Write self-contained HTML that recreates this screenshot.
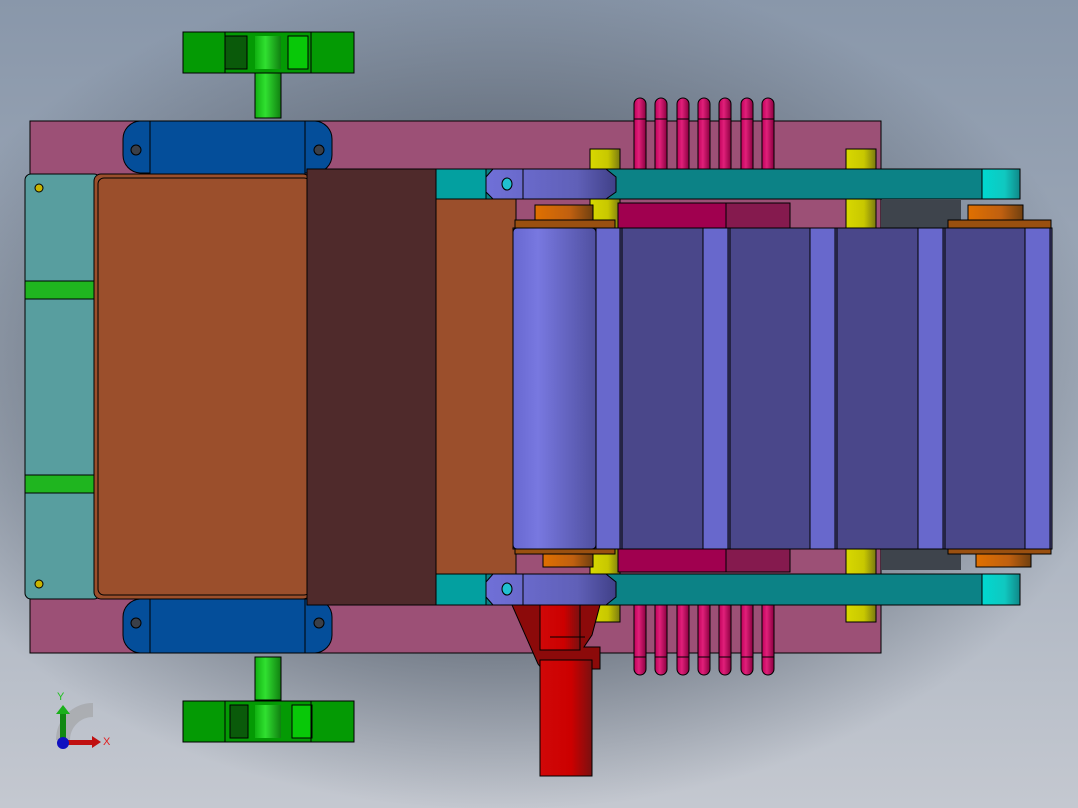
<!DOCTYPE html>
<html><head><meta charset="utf-8"><style>
html,body{margin:0;padding:0;width:1078px;height:808px;overflow:hidden}
body{background:radial-gradient(ellipse 620px 420px at 500px 390px,#3c4550 0%,#5a6370 45%,rgba(0,0,0,0) 100%),linear-gradient(#8997aa,#a9b2bf 60%,#c4c8d0);}
svg{position:absolute;left:0;top:0}
text{font-family:"Liberation Sans",sans-serif}
</style></head><body>
<svg width="1078" height="808" viewBox="0 0 1078 808" stroke="#000" stroke-width="1">
<defs>
<linearGradient id="rod" x1="0" x2="1"><stop offset="0" stop-color="#c0005a"/><stop offset=".4" stop-color="#e0207a"/><stop offset="1" stop-color="#8a0040"/></linearGradient>
<linearGradient id="yel" x1="0" x2="1"><stop offset="0" stop-color="#d8d800"/><stop offset=".6" stop-color="#c8c800"/><stop offset="1" stop-color="#7a7a10"/></linearGradient>
<linearGradient id="red" x1="0" x2="1"><stop offset="0" stop-color="#d00808"/><stop offset=".6" stop-color="#c00"/><stop offset="1" stop-color="#7a1010"/></linearGradient>
<linearGradient id="axle" x1="0" x2="1"><stop offset="0" stop-color="#10b010"/><stop offset=".4" stop-color="#30e030"/><stop offset="1" stop-color="#108010"/></linearGradient>
<linearGradient id="roll1" x1="0" x2="1"><stop offset="0" stop-color="#6868d0"/><stop offset=".3" stop-color="#7878e0"/><stop offset="1" stop-color="#5050a0"/></linearGradient>
<linearGradient id="clamp" x1="0" x2="1"><stop offset="0" stop-color="#7070d8"/><stop offset=".7" stop-color="#6060b8"/><stop offset="1" stop-color="#404088"/></linearGradient>
<linearGradient id="cyan" x1="0" x2="1"><stop offset="0" stop-color="#00d8d0"/><stop offset=".6" stop-color="#10c8c0"/><stop offset="1" stop-color="#108888"/></linearGradient>
<linearGradient id="org" x1="0" x2="1"><stop offset="0" stop-color="#e07000"/><stop offset=".6" stop-color="#c06010"/><stop offset="1" stop-color="#704010"/></linearGradient>
</defs>
<!-- pink plate -->
<rect x="30" y="121" width="851" height="532" fill="#9c5076"/>
<!-- rods -->
<g fill="url(#rod)">
<path d="M634 170V104a6 6 0 0 1 12 0V170Z"/><path d="M655 170V104a6 6 0 0 1 12 0V170Z"/><path d="M677 170V104a6 6 0 0 1 12 0V170Z"/><path d="M698 170V104a6 6 0 0 1 12 0V170Z"/><path d="M719 170V104a6 6 0 0 1 12 0V170Z"/><path d="M741 170V104a6 6 0 0 1 12 0V170Z"/><path d="M762 170V104a6 6 0 0 1 12 0V170Z"/>
<path d="M634 604V669a6 6 0 0 0 12 0V604Z"/><path d="M655 604V669a6 6 0 0 0 12 0V604Z"/><path d="M677 604V669a6 6 0 0 0 12 0V604Z"/><path d="M698 604V669a6 6 0 0 0 12 0V604Z"/><path d="M719 604V669a6 6 0 0 0 12 0V604Z"/><path d="M741 604V669a6 6 0 0 0 12 0V604Z"/><path d="M762 604V669a6 6 0 0 0 12 0V604Z"/>
</g>
<g fill="none" stroke="#000"><path d="M634 119h12M655 119h12M677 119h12M698 119h12M719 119h12M741 119h12M762 119h12M634 657h12M655 657h12M677 657h12M698 657h12M719 657h12M741 657h12M762 657h12"/></g>
<!-- shadow gray area right -->
<rect x="881" y="200" width="80" height="370" fill="#3e444c" stroke="none"/>
<!-- wheels -->
<rect x="255" y="73" width="26" height="45" fill="url(#axle)"/>
<rect x="183" y="32" width="171" height="41" fill="#049a04"/>
<rect x="225" y="36" width="22" height="33" fill="#0a5a0a"/><rect x="288" y="36" width="20" height="33" fill="#08c808"/>
<rect x="255" y="36" width="26" height="33" fill="url(#axle)" stroke="none"/>
<line x1="225" y1="32" x2="225" y2="73"/><line x1="311" y1="32" x2="311" y2="73"/>
<rect x="255" y="657" width="26" height="43" fill="url(#axle)"/>
<rect x="183" y="701" width="171" height="41" fill="#049a04"/>
<rect x="230" y="705" width="18" height="33" fill="#0a5a0a"/><rect x="292" y="705" width="20" height="33" fill="#08c808"/>
<rect x="255" y="705" width="26" height="33" fill="url(#axle)" stroke="none"/>
<line x1="225" y1="701" x2="225" y2="742"/><line x1="311" y1="701" x2="311" y2="742"/>
<!-- blue blocks -->
<path d="M150 121h-10a18 18 0 0 0-17 18v16a18 18 0 0 0 17 18h10Z" fill="#044e9a"/>
<path d="M305 121h10a18 18 0 0 1 17 18v16a18 18 0 0 1-17 18h-10Z" fill="#044e9a"/>
<rect x="150" y="121" width="155" height="53" fill="#044e9a"/>
<circle cx="136" cy="150" r="5" fill="#3a3f48"/><circle cx="319" cy="150" r="5" fill="#3a3f48"/>
<path d="M150 599h-10a18 18 0 0 0-17 18v18a18 18 0 0 0 17 18h10Z" fill="#044e9a"/>
<path d="M305 599h10a18 18 0 0 1 17 18v18a18 18 0 0 1-17 18h-10Z" fill="#044e9a"/>
<rect x="150" y="599" width="155" height="54" fill="#044e9a"/>
<circle cx="136" cy="623" r="5" fill="#3a3f48"/><circle cx="319" cy="623" r="5" fill="#3a3f48"/>
<!-- teal left -->
<rect x="25" y="174" width="75" height="425" rx="6" fill="#589e9f"/>
<rect x="25" y="281" width="70" height="18" fill="#1fb51f"/><rect x="25" y="475" width="70" height="18" fill="#1fb51f"/>
<circle cx="39" cy="188" r="4" fill="#c8b400"/><circle cx="39" cy="584" r="4" fill="#c8b400"/>
<!-- brown -->
<rect x="94" y="174" width="216" height="425" rx="7" fill="#9b4f2c"/>
<rect x="98" y="178" width="212" height="417" rx="6" fill="none"/>
<rect x="436" y="199" width="80" height="376" fill="#9b4f2c"/>
<rect x="307" y="169" width="129" height="436" fill="#4f2a2b"/>
<!-- yellow posts -->
<rect x="590" y="149" width="30" height="82" fill="url(#yel)"/><rect x="846" y="149" width="30" height="82" fill="url(#yel)"/>
<rect x="590" y="545" width="30" height="77" fill="url(#yel)"/><rect x="846" y="545" width="30" height="77" fill="url(#yel)"/>
<!-- magenta -->
<rect x="618" y="203" width="108" height="26" fill="#a0004f"/><rect x="726" y="203" width="64" height="26" fill="#851a4e"/>
<rect x="618" y="548" width="108" height="24" fill="#a0004f"/><rect x="726" y="548" width="64" height="24" fill="#851a4e"/>
<!-- orange gears -->
<rect x="535" y="205" width="58" height="15" fill="url(#org)"/><rect x="968" y="205" width="55" height="15" fill="url(#org)"/>
<rect x="515" y="220" width="100" height="8" fill="#9a5010"/><rect x="948" y="220" width="103" height="8" fill="#9a5010"/>
<rect x="543" y="552" width="50" height="15" fill="url(#org)"/><rect x="976" y="552" width="55" height="15" fill="url(#org)"/>
<rect x="515" y="548" width="100" height="6" fill="#9a5010"/><rect x="948" y="548" width="103" height="6" fill="#9a5010"/>
<!-- rollers -->
<rect x="513" y="228" width="539" height="321" fill="#4a478a"/>
<rect x="513" y="228" width="83" height="321" rx="4" fill="url(#roll1)"/>
<g fill="#6868cc"><rect x="596" y="228" width="24" height="321"/><rect x="703" y="228" width="25" height="321"/><rect x="810" y="228" width="25" height="321"/><rect x="918" y="228" width="25" height="321"/><rect x="1025" y="228" width="25" height="321"/></g>
<g fill="none"><line x1="622" y1="228" x2="622" y2="549"/><line x1="730" y1="228" x2="730" y2="549"/><line x1="837" y1="228" x2="837" y2="549"/><line x1="945" y1="228" x2="945" y2="549"/></g>
<!-- teal bars -->
<rect x="436" y="169" width="584" height="30" fill="#0c8286"/>
<rect x="436" y="574" width="584" height="31" fill="#0c8286"/>
<rect x="982" y="169" width="38" height="30" fill="url(#cyan)"/><rect x="982" y="574" width="38" height="31" fill="url(#cyan)"/>
<rect x="436" y="169" width="50" height="30" fill="#03a0a0"/><rect x="436" y="574" width="50" height="31" fill="#03a0a0"/>
<path d="M493 169h113l10 8v15l-10 7h-113l-7-7v-15Z" fill="url(#clamp)"/>
<path d="M493 574h113l10 8v15l-10 8h-113l-7-8v-15Z" fill="url(#clamp)"/>
<line x1="523" y1="169" x2="523" y2="199"/><line x1="523" y1="574" x2="523" y2="605"/>
<ellipse cx="507" cy="184" rx="5" ry="6" fill="#20c0d0"/><ellipse cx="507" cy="589" rx="5" ry="6" fill="#20c0d0"/>
<!-- red motor -->
<path d="M512 605h88l-8 30-8 12h16v22l-40 0-18 0-4-5Z" fill="#8c0a0a"/>
<rect x="540" y="605" width="40" height="45" fill="url(#red)"/>
<rect x="540" y="660" width="52" height="116" fill="url(#red)"/>
<line x1="550" y1="637" x2="585" y2="637"/>
<!-- triad -->
<g stroke="none">
<path d="M63 740 A30 30 0 0 1 93 710" fill="none" stroke="#999" stroke-width="14" opacity=".5"/>
<rect x="60" y="712" width="6" height="30" fill="#118811"/><path d="M56 714l7-9 7 9Z" fill="#1ab01a"/>
<rect x="63" y="740" width="30" height="5" fill="#c01010"/><path d="M92 736l9 6-9 6Z" fill="#c01010"/>
<circle cx="63" cy="743" r="6" fill="#1010c0"/>
</g>
<text x="57" y="700" font-size="11" fill="#20c020" stroke="none">Y</text>
<text x="103" y="745" font-size="11" fill="#e02020" stroke="none">X</text>
</svg>
</body></html>
